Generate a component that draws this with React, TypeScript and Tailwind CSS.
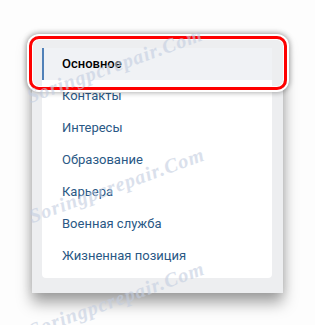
const items = [
  "Контакты",
  "Интересы",
  "Образование",
  "Карьера",
  "Военная служба",
  "Жизненная позиция",
];

function Watermark({ top, left }: { top: number; left: number }) {
  return (
    <span
      className="pointer-events-none absolute -rotate-[20deg] whitespace-nowrap font-['Liberation_Serif',serif] text-[20px] font-bold italic tracking-[1px] text-[#c3cde0] opacity-60"
      style={{ top, left }}
    >
      Soringpcrepair.Com
    </span>
  );
}

export default function App() {
  return (
    <div className="relative h-[325px] w-[315px] overflow-hidden bg-[#fdfdfd] font-['Roboto',sans-serif]">
      <div className="ml-[32px] mt-[36px] w-[251px] bg-[#edeef0] pb-[15px] pl-[10px] pr-[11px] pt-[12px] shadow-[0_10px_14px_rgba(0,0,0,0.35),0_0_10px_rgba(0,0,0,0.12)]">
        <div className="rounded-b-[4px] bg-white pb-[6px]">
          <div className="flex h-[32px] items-center border-l-2 border-[#5181b8] bg-[#f0f2f5] pl-[18px] text-[13px] font-medium text-black">
            Основное
          </div>
          {items.map((t) => (
            <div key={t} className="flex h-[32px] items-center pl-[20px] text-[13px] text-[#2a5885]">
              {t}
            </div>
          ))}
        </div>
      </div>

      {/* red highlight around the active item */}
      <div className="absolute left-[29px] top-[36px] h-[54px] w-[258px] rounded-[10px] border-[3px] border-[#ff0000] shadow-[0_0_0_2px_#fff,0_0_5px_3px_rgba(0,0,0,0.3),inset_0_0_0_1px_#fff]" />

      <Watermark top={50} left={22} />
      <Watermark top={170} left={24} />
      <Watermark top={284} left={24} />
    </div>
  );
}
